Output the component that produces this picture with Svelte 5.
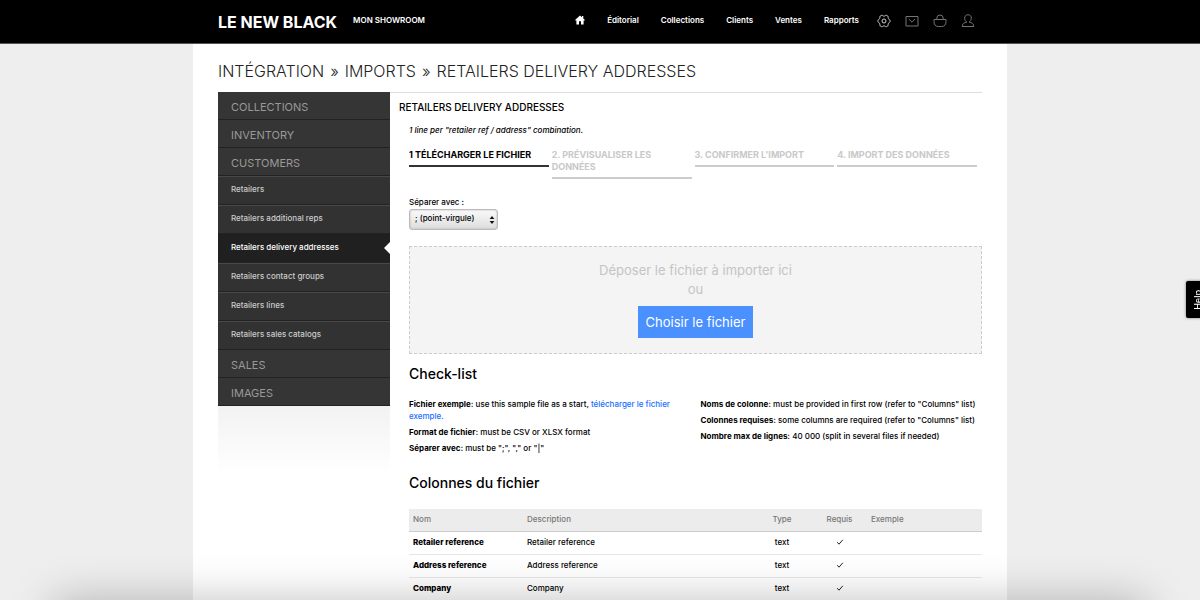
<script>
  const nav = ['Éditorial', 'Collections', 'Clients', 'Ventes', 'Rapports'];
  const retailers = [
    'Retailers',
    'Retailers additional reps',
    'Retailers delivery addresses',
    'Retailers contact groups',
    'Retailers lines',
    'Retailers sales catalogs'
  ];
  const menu = [
    { name: 'COLLECTIONS', items: [] },
    { name: 'INVENTORY', items: [] },
    { name: 'CUSTOMERS', items: retailers },
    { name: 'SALES', items: [] },
    { name: 'IMAGES', items: [] }
  ];
  const active = 'Retailers delivery addresses';
  const steps = [
    '1 TÉLÉCHARGER LE FICHIER',
    '2. PRÉVISUALISER LES DONNÉES',
    "3. CONFIRMER L'IMPORT",
    '4. IMPORT DES DONNÉES'
  ];
  const rows = ['Retailer reference', 'Address reference', 'Company'];
</script>

<header>
  <div class="bar">
    <a class="logo" href="#home">LE NEW BLACK</a>
    <a class="showroom" href="#showroom">MON SHOWROOM</a>
    <nav aria-label="Principal">
      <a class="home" href="#home" aria-label="Accueil">
        <svg width="10" height="10" viewBox="0 0 10 10"><path fill="#fff" d="M5 .4 7 2.200V1h1.300v2.400L9.700 4.800V5.600H8.600V9.500H6V6.300H4V9.500H1.400V5.600H.3V4.800z" /></svg>
      </a>
      {#each nav as item}
        <a href="#{item}">{item}</a>
      {/each}
    </nav>
    <div class="tools">
      <button aria-label="Paramètres">
        <svg width="14" height="14" viewBox="0 0 14 14" fill="none" stroke="#d0d0d0" stroke-linejoin="round"><path d="M4.600 1.300C5.600 1 5.900 2.200 7 2.200S8.400 1 9.400 1.300l1.400.8c.8.700 0 1.500.5 2.400s1.500.8 1.700 1.800v1.400c-.2 1-1.200.9-1.700 1.800s.3 1.700-.5 2.400l-1.400.8c-1 .3-1.300-.9-2.400-.9s-1.400 1.200-2.400.9l-1.400-.8c-.8-.7 0-1.500-.5-2.400S1.200 8.700 1 7.700V6.300c.2-1 1.200-.9 1.700-1.800s-.3-1.700.5-2.400z" /><circle cx="7" cy="7" r="2" /></svg>
      </button>
      <button aria-label="Messages">
        <svg width="14" height="14" viewBox="0 0 14 14" fill="none" stroke="#747474"><path d="M1 2.500h12v9.500H1zM3.800 5 7 8.200 10.200 5" /></svg>
      </button>
      <button aria-label="Panier">
        <svg width="14" height="14" viewBox="0 0 14 14" fill="none" stroke="#747474"><path d="M1 5.500h12v2c0 3.500-1.800 5-4.500 5h-3C2.800 12.500 1 11 1 7.500zM3.800 5.500V4.200a3.200 3.200 0 0 1 6.400 0v1.300" /></svg>
      </button>
      <button aria-label="Compte">
        <svg width="14" height="14" viewBox="0 0 14 14" fill="none" stroke="#747474"><path d="M7 .8c2.200 0 3.300 1.400 3.300 3.300 0 1.900-1 3.200-2 4 2.700.4 4.500 1.900 4.500 4.400H1.200c0-2.500 1.800-4 4.500-4.400-1-.8-2-2.100-2-4C3.700 2.200 4.800.8 7 .8z" /></svg>
      </button>
    </div>
  </div>
</header>

<main>
  <h1>INTÉGRATION<span>»</span>IMPORTS<span>»</span>RETAILERS DELIVERY ADDRESSES</h1>
  <div class="columns">
    <aside>
      <nav class="side" aria-label="Imports">
        {#each menu as group}
          <a class="group" href="#{group.name}">{group.name}</a>
          {#each group.items as item}
            <a class="sub" class:active={item === active} href="#{item}">{item}</a>
          {/each}
        {/each}
      </nav>
      <div class="fade"></div>
    </aside>

    <section>
      <h2>RETAILERS DELIVERY ADDRESSES</h2>
      <div class="body">
        <p class="hint">1 line per "retailer ref / address" combination.</p>
        <ol class="steps">
          {#each steps as step, i}
            <li class:current={i === 0}>{step}</li>
          {/each}
        </ol>

        <label class="sep" for="separator">Séparer avec :</label>
        <div class="select">
          <select id="separator">
            <option>; (point-virgule)</option>
          </select>
          <svg width="6" height="10" viewBox="0 0 6 10"><path fill="#111" d="M3 1 5.400 4H.6zM3 9 .6 6h4.800z" /></svg>
        </div>

        <div class="drop">
          <p>Déposer le fichier à importer ici</p>
          <p>ou</p>
          <button>Choisir le fichier</button>
        </div>

        <h3>Check-list</h3>
        <div class="checks">
          <div>
            <p><b>Fichier exemple:</b> use this sample file as a start, <a href="#exemple">télécharger le fichier exemple.</a></p>
            <p><b>Format de fichier:</b> must be CSV or XLSX format</p>
            <p><b>Séparer avec:</b> must be ";", "," or "|"</p>
          </div>
          <div>
            <p><b>Noms de colonne:</b> must be provided in first row (refer to "Columns" list)</p>
            <p><b>Colonnes requises:</b> some columns are required (refer to "Columns" list)</p>
            <p><b>Nombre max de lignes:</b> 40 000 (split in several files if needed)</p>
          </div>
        </div>

        <h3>Colonnes du fichier</h3>
        <table>
          <thead>
            <tr>
              <th class="c1">Nom</th>
              <th>Description</th>
              <th class="c3">Type</th>
              <th class="c4">Requis</th>
              <th class="c5">Exemple</th>
            </tr>
          </thead>
          <tbody>
            {#each rows as row}
              <tr>
                <td><b>{row}</b></td>
                <td>{row}</td>
                <td class="c3">text</td>
                <td class="c4">
                  <svg width="8" height="8" viewBox="0 0 8 8" fill="none" stroke="#222" role="img" aria-label="oui"><path d="M1.200 4.200 3 6.200 6.800 1.800" /></svg>
                </td>
                <td></td>
              </tr>
            {/each}
          </tbody>
        </table>
      </div>
    </section>
  </div>
</main>

<button class="help">Help</button>
<div class="shade"></div>

<style>
  :global(body) {
    background: #eee;
    color: #000;
    font: 500 8px/12px Inter, 'Liberation Sans', sans-serif;
    overflow-x: hidden;
  }
  h1, h2, h3, p, ol { margin: 0; padding: 0; font-weight: inherit; }
  a { color: inherit; text-decoration: none; }
  button { border: 0; padding: 0; background: none; font: inherit; color: inherit; cursor: pointer; }
  svg { display: block; }

  header { background: #000; color: #fff; border-bottom: 1px solid #555; }
  .bar {
    display: flex;
    align-items: center;
    height: 43px;
    max-width: 764px;
    margin: 0 auto;
    padding: 0 25px;
    box-sizing: content-box;
  }
  .bar a { padding-bottom: 3px; }
  .bar .logo { font-size: 16px; line-height: 20px; font-weight: 700; padding: 0; white-space: nowrap; }
  .showroom { margin-left: 16px; font-weight: 600; }
  .bar nav { display: flex; align-items: center; gap: 22px; margin-left: auto; font-weight: 600; }
  .tools { display: flex; gap: 14px; margin: 0 7px 0 18px; padding-bottom: 2px; }

  main {
    max-width: 764px;
    min-height: calc(100vh - 44px);
    margin: 0 auto;
    padding: 0 25px;
    background: #fff;
  }
  h1 { padding: 16px 0 10px; font-size: 16px; line-height: 22px; font-weight: 300; color: #222; }
  h1 span { margin: 0 6px; }
  .columns { display: flex; border-top: 1px solid #ddd; }
  aside { flex: none; width: 172px; }
  .side { margin-top: -1px; background: #353535; color: #999; border-bottom: 1px solid #222; }
  .side a { display: block; padding-left: 13px; }
  .group { height: 27px; border-bottom: 1px solid #222; font-size: 11px; line-height: 31px; font-weight: 400; }
  .group:last-child { border-bottom: 0; }
  .sub { position: relative; height: 27px; border-top: 1px solid #484848; border-bottom: 1px solid #222; background: #323232; color: #ccc; line-height: 24px; }
  .active { background: #202020; border-top-color: #202020; color: #fff; }
  .active::after {
    content: '';
    position: absolute;
    right: 0;
    top: 7px;
    border: solid transparent;
    border-width: 6px 6px 6px 0;
    border-right-color: #fff;
  }
  .fade { height: 68px; background: linear-gradient(#f2f2f2, #fff); }

  section { flex: 1; min-width: 0; padding-left: 9px; }
  h2 { padding-top: 8px; font-size: 10px; line-height: 12px; }
  .body { padding-left: 10px; }
  .hint { padding-top: 11px; font-style: italic; }
  .steps { display: grid; grid-template-columns: repeat(4, 1fr); align-items: start; gap: 3px; padding: 13px 5px 0 0; list-style: none; }
  .steps li { padding-bottom: 4px; border-bottom: 2px solid #ccc; color: #c8c8c8; font-size: 9px; font-weight: 700; }
  .steps .current { border-color: #333; color: #000; }
  .sep { display: block; padding-top: 17px; }
  .select { display: inline-grid; align-items: center; margin-top: 1px; vertical-align: top; }
  .select > * { grid-area: 1 / 1; }
  .select svg { justify-self: end; margin-right: 3px; pointer-events: none; }
  select {
    appearance: none;
    width: 89px;
    height: 21px;
    padding: 0 5px 4px;
    border: 1px solid #bbb;
    border-radius: 3px;
    background: linear-gradient(#fafafa, #ddd);
    box-shadow: inset 0 0 2px #aaa;
    color: #000;
    font: inherit;
  }
  .drop {
    margin-top: 16px;
    padding: 14px 0 15px;
    border: 1px dashed #ccc;
    background: #f4f4f4;
    color: #c4c4c4;
    text-align: center;
    font-size: 13px;
    line-height: 19px;
    font-weight: 400;
  }
  .drop button { margin-top: 7px; padding: 0 8px; background: #4a90ff; color: #fff; line-height: 32px; vertical-align: top; }
  h3 { padding-top: 10px; font-size: 14px; line-height: 20px; }
  .checks { display: grid; grid-template-columns: 1fr 1fr; gap: 10px; padding: 14px 0 5px; }
  .checks p { margin-bottom: 4px; }
  .checks a { color: #1a6dff; }
  b { font-weight: 700; }
  td b { font-weight: 800; }
  table { width: 100%; margin-top: 16px; border-collapse: collapse; table-layout: fixed; }
  th { height: 20px; padding: 0 4px 2px; background: #ececec; border-bottom: 1px solid #ccc; color: #777; font-weight: 500; text-align: left; }
  td { height: 20px; padding: 0 4px 2px; border-bottom: 1px solid #e8e8e8; }
  .c1 { width: 106px; }
  .c3 { width: 52px; text-align: center; }
  .c4 { width: 47px; text-align: center; }
  .c4 svg { margin: 0 auto; }
  .c5 { width: 107px; }

  .help {
    position: fixed;
    right: -10px;
    top: 281px;
    width: 24px;
    height: 37px;
    border-radius: 2px;
    background: #000;
    box-shadow: 0 0 3px #777;
    color: #fff;
    writing-mode: sideways-lr;
    font-size: 9px;
    line-height: 24px;
  }
  .shade {
    position: fixed;
    left: 54px;
    right: 54px;
    top: 100%;
    height: 60px;
    box-shadow: 0 0 44px rgba(0, 0, 0, 0.25);
    pointer-events: none;
  }
</style>
